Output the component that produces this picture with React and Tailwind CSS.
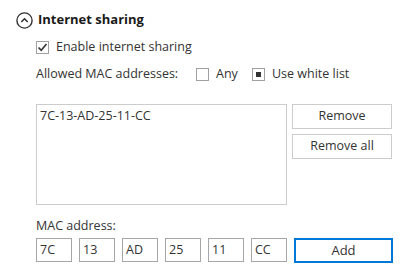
import React from "react";

const font = { fontFamily: '"Open Sans", "Noto Sans", sans-serif' };

function Check({ checked, square }) {
  return (
    <span className="w-[13px] h-[13px] border border-[#a0a0a0] bg-white flex items-center justify-center shrink-0">
      {checked && (
        <svg width="11" height="11" viewBox="0 0 11 11">
          <path d="M1.5 5.5 L4.2 8.3 L9.5 2" fill="none" stroke="#333" strokeWidth="1.6" />
        </svg>
      )}
      {square && <span className="w-[5px] h-[5px] bg-[#333]" />}
    </span>
  );
}

export default function App() {
  const parts = ["7C", "13", "AD", "25", "11", "CC"];

  return (
    <div className="w-[409px] h-[274px] bg-white text-[#333] text-[12.5px]" style={font}>
      <div className="flex items-center gap-[5px] pl-[16px] pt-[12px] h-[16px] box-content">
        <svg width="17" height="17" viewBox="0 0 17 17">
          <circle cx="8.5" cy="8.5" r="7.6" fill="none" stroke="#333" strokeWidth="1.4" />
          <path d="M5.3 10 L8.5 6.8 L11.7 10" fill="none" stroke="#333" strokeWidth="1.6" />
        </svg>
        <span className="text-[13px] font-bold text-[#1a1a1a]">Internet sharing</span>
      </div>

      <div className="pl-[36px]">
        <div className="flex items-center gap-[7px] mt-[13px] h-[13px]">
          <Check checked />
          <span>Enable internet sharing</span>
        </div>

        <div className="flex items-center mt-[14px] h-[13px]">
          <span className="w-[160px]">Allowed MAC addresses:</span>
          <Check />
          <span className="ml-[7px] w-[36px]">Any</span>
          <Check square />
          <span className="ml-[7px]">Use white list</span>
        </div>

        <div className="flex gap-[5px] mt-[23px]">
          <div className="w-[251px] h-[101px] border border-[#cccccc] px-[3px] pt-[2px]">
            7C-13-AD-25-11-CC
          </div>
          <div className="flex flex-col gap-[5px]">
            <button className="w-[100px] h-[25px] border border-[#cccccc] bg-white text-[#333]">Remove</button>
            <button className="w-[100px] h-[25px] border border-[#cccccc] bg-white text-[#333]">Remove all</button>
          </div>
        </div>

        <div className="mt-[12px] leading-[17px]">MAC address:</div>

        <div className="flex gap-[7px] mt-[4px]">
          {parts.map((p, i) => (
            <div key={i} className="w-[36px] h-[24px] border border-[#a6a6a6] px-[3px] flex items-center">
              {p}
            </div>
          ))}
          <button className="w-[99px] h-[25px] border-2 border-[#0078d7] bg-white text-[#333] text-[13px]">Add</button>
        </div>
      </div>
    </div>
  );
}
